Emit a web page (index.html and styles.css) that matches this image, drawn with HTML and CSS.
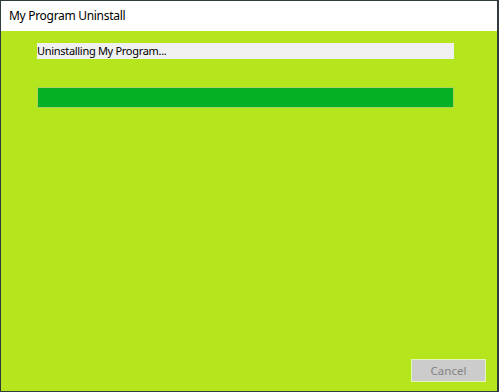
FILE: index.html
```html
<!DOCTYPE html>
<html lang="en">
<head>
    <meta charset="UTF-8">
    <title>My Program Uninstall</title>
    <link rel="stylesheet" href="styles.css">
</head>
<body>
    <div class="window">
        <div class="titlebar">My Program Uninstall</div>
        <div class="content">
            <div class="status">Uninstalling My Program...</div>
            <div class="progress"><div class="fill"></div></div>
            <div class="spacer"></div>
            <div class="buttons">
                <button class="cancel" disabled>Cancel</button>
            </div>
        </div>
    </div>
</body>
</html>
```

FILE: styles.css
```css
html, body {
    margin: 0;
    padding: 0;
}
body {
    font-family: "Liberation Sans", Arial, sans-serif;
    font-size: 12px;
}
.window {
    width: 499px;
    height: 392px;
    box-sizing: border-box;
    border: 1px solid #2f3b3d;
    border-right-width: 2px;
    display: flex;
    flex-direction: column;
}
.titlebar {
    height: 30px;
    background: #ffffff;
    color: #000;
    font-family: "Noto Sans", sans-serif;
    font-size: 12px;
    letter-spacing: -0.3px;
    line-height: 30px;
    padding-left: 8px;
}
.content {
    flex: 1;
    background: #b5e61d;
    display: flex;
    flex-direction: column;
    padding: 12px 11px 9px 36px;
}
.status {
    width: 417px;
    height: 16px;
    background: #f0f0f0;
    font-family: "Noto Sans", sans-serif;
    font-size: 11px;
    line-height: 16px;
    color: #000;
    letter-spacing: -0.3px;
}
.progress {
    width: 417px;
    height: 21px;
    box-sizing: border-box;
    margin-top: 28px;
    border: 1px solid #a9d35c;
    background: #e6e6e6;
}
.fill {
    width: 100%;
    height: 100%;
    background: #06b025;
}
.spacer {
    flex: 1;
}
.buttons {
    display: flex;
    justify-content: flex-end;
}
.cancel {
    width: 75px;
    height: 23px;
    background: #cccccc;
    border: 1px solid #e5f5b5;
    color: #838383;
    font-family: "Noto Sans", sans-serif;
    font-size: 11.5px;
    padding: 0;
}
```
